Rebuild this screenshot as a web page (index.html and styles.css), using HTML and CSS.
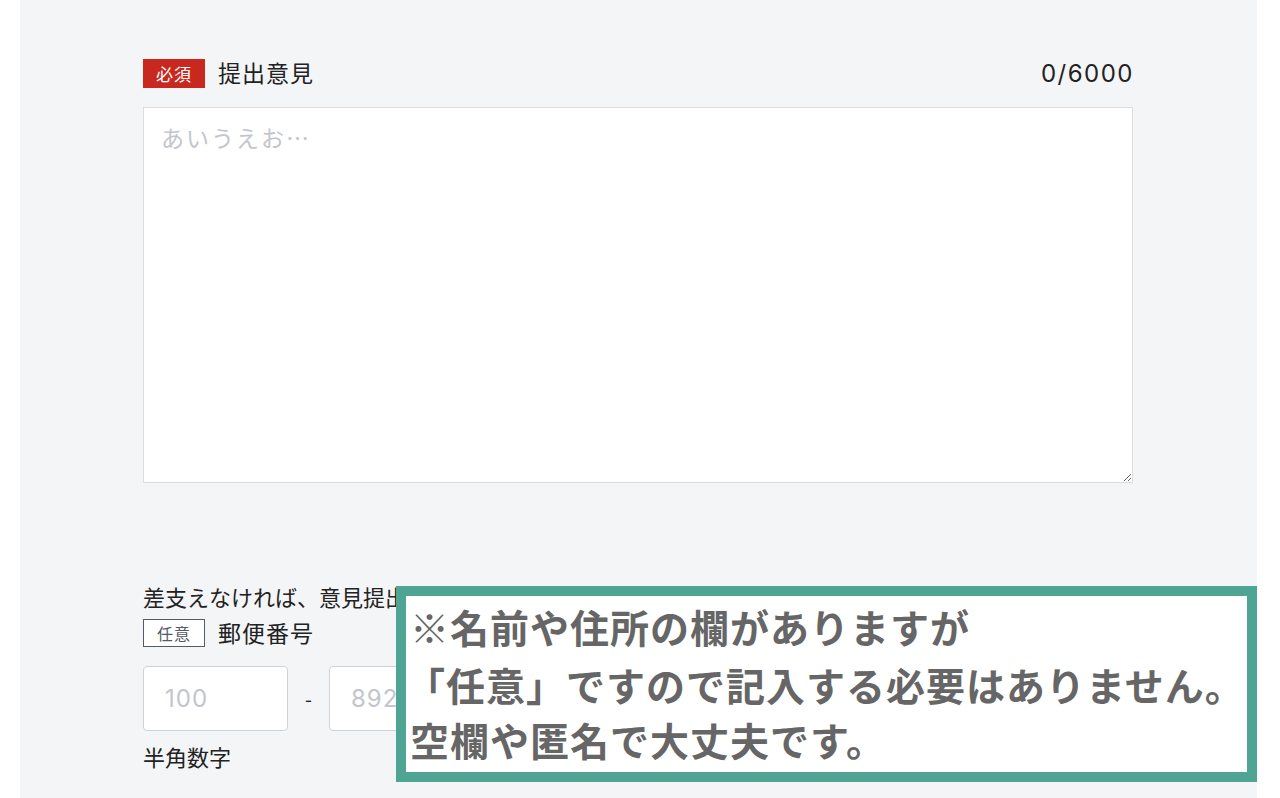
FILE: index.html
```html
<!DOCTYPE html>
<html lang="ja">
<head>
<meta charset="utf-8">
<link rel="stylesheet" href="styles.css">
</head>
<body>
<div class="panel">
  <div class="field-head">
    <span class="badge badge-req">必須</span>
    <span class="label">提出意見</span>
    <span class="counter">0/6000</span>
  </div>
  <textarea class="opinion" placeholder="あいうえお…"></textarea>

  <p class="note">差支えなければ、意見提出者として、住所・氏名・年齢等の情報を入力してください。</p>
  <div class="field-head small">
    <span class="badge badge-opt">任意</span>
    <span class="label">郵便番号</span>
  </div>
  <div class="zip-row">
    <input class="zip" type="text" placeholder="100">
    <span class="dash">-</span>
    <input class="zip" type="text" placeholder="8926">
  </div>
  <p class="hint">半角数字</p>
</div>

<div class="callout">
  <p class="l1">※名前や住所の欄がありますが</p>
  <p class="l2">「任意」ですので記入する必要はありません。</p>
  <p class="l3">空欄や匿名で大丈夫です。</p>
</div>
</body>
</html>
```

FILE: styles.css
```css
* { box-sizing: border-box; }
html, body {
  margin: 0;
  padding: 0;
  background: #ffffff;
  font-family: "Noto Sans CJK JP", "Noto Sans", sans-serif;
  color: #222;
}
.panel {
  margin-left: 20px;
  width: 1237px;
  height: 798px;
  background: #f4f5f7;
  padding: 59px 124px 0 123px;
  display: flex;
  flex-direction: column;
}
.field-head {
  display: flex;
  align-items: center;
  height: 29px;
  margin-bottom: 19px;
}
.field-head.small { height: 28px; }
.badge {
  display: inline-flex;
  align-items: center;
  justify-content: center;
  width: 62px;
  height: 29px;
  font-size: 17px;
  line-height: 1;
  margin-right: 13px;
  letter-spacing: 1px;
}
.badge-req {
  background: #c9281e;
  color: #fff;
}
.badge-opt {
  height: 28px;
  border: 1px solid #555b66;
  color: #555b66;
  background: #fff;
  font-size: 16px;
}
.label {
  font-size: 23px;
  line-height: 1;
  color: #222;
  letter-spacing: 1px;
  margin-top: -2px;
}
.counter {
  margin-left: auto;
  font-family: "Inter", "Liberation Sans", sans-serif;
  font-size: 24px;
  line-height: 1;
  color: #222;
  letter-spacing: 1.5px;
  margin-right: -1px;
}
.opinion {
  display: block;
  width: 990px;
  height: 376px;
  border: 1px solid #dcdcdc;
  background: #fff;
  padding: 13px 17px;
  font-family: inherit;
  font-size: 23px;
  letter-spacing: 2px;
  line-height: 32px;
  margin: 0 0 99px 0;
  resize: both;
  outline: none;
}
.opinion::placeholder { color: #c3c5cc; }
.note {
  margin: 0 0 9px;
  font-size: 22px;
  line-height: 28px;
  color: #222;
  white-space: nowrap;
}
.zip-row {
  display: flex;
  align-items: center;
  margin-bottom: 11px;
}
.zip {
  width: 145px;
  height: 65px;
  border: 1px solid #cfd2d9;
  border-radius: 4px;
  background: #fff;
  padding: 0 21px;
  font-family: "Inter", "Liberation Sans", sans-serif;
  font-size: 24px;
  letter-spacing: 1px;
  outline: none;
}
.zip::placeholder { color: #c3c5cc; }
.dash {
  width: 41px;
  text-align: center;
  font-size: 20px;
  color: #222;
}
.hint {
  margin: 0;
  font-size: 22px;
  line-height: 28px;
  color: #222;
}
.callout {
  position: absolute;
  left: 396px;
  top: 586px;
  width: 861px;
  height: 196px;
  border: 10px solid #4ea594;
  background: #fff;
  padding: 0 0 0 4px;
}
.callout p {
  margin: 0;
  font-size: 39px;
  font-weight: 700;
  color: #666;
  white-space: nowrap;
  letter-spacing: 1px;
}
.callout .l1 { line-height: 60px; }
.callout .l2 { line-height: 57px; margin-left: -4px; }
.callout .l3 { line-height: 52px; }
```
